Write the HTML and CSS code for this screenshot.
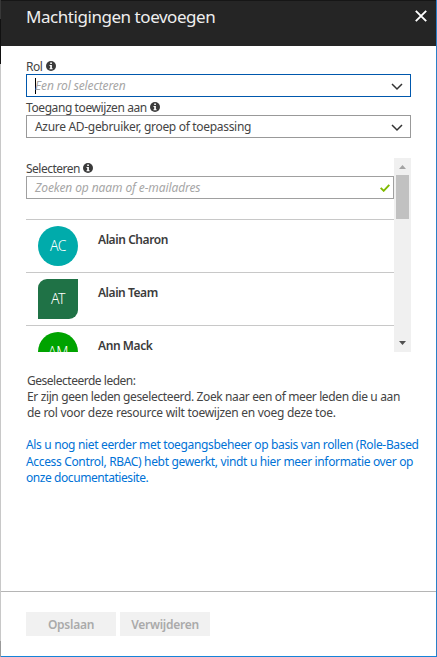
FILE: index.html
```
<!DOCTYPE html>
<html lang="nl">
<head>
<meta charset="utf-8">
<title>Machtigingen toevoegen</title>
<link rel="stylesheet" href="styles.css">
</head>
<body>
<svg class="defs" width="0" height="0" aria-hidden="true">
  <symbol id="info" viewBox="0 0 10 10"><circle cx="5" cy="5" r="5" fill="#3b3b3b"/><path d="M4.2 1.6h1.7v1.5H4.2zM3.5 4h2.4v3.3h.7v1H3.5v-1h.7V5h-.7z" fill="#fff"/></symbol>
  <symbol id="chevron" viewBox="0 0 12 8"><path d="M1 1l5 5 5-5" fill="none" stroke="#333" stroke-width="1.5"/></symbol>
</svg>
<div class="edge"></div>
<main class="blade">
  <header class="header">
    <h1><span class="t-title">Machtigingen toevoegen</span></h1>
    <svg class="close" viewBox="0 0 12 12"><path d="M.8.8l10.4 10.4M11.2.8L.8 11.2" stroke="#fff" stroke-width="1.9"/></svg>
  </header>
  <section class="body">
    <div class="label"><span class="t-rol">Rol</span><svg><use href="#info"/></svg></div>
    <div class="field focused"><i class="caret"></i><span class="hint t-hint1">Een rol selecteren</span><svg class="chevron"><use href="#chevron"/></svg></div>
    <div class="label second"><span class="t-toegang">Toegang toewijzen aan</span><svg><use href="#info"/></svg></div>
    <div class="field"><span class="t-azure">Azure AD-gebruiker, groep of toepassing</span><svg class="chevron"><use href="#chevron"/></svg></div>
    <div class="picker">
      <div class="content">
        <div class="label"><span class="t-select">Selecteren</span><svg><use href="#info"/></svg></div>
        <div class="field search"><span class="hint t-hint2">Zoeken op naam of e-mailadres</span><svg class="check" viewBox="0 0 10 8"><path d="M.7 3.8l3 3L9.3.8" fill="none" stroke="#7fba00" stroke-width="1.9"/></svg></div>
        <ul class="members">
          <li><span class="avatar teal">AC</span><b class="t-charon">Alain Charon</b></li>
          <li><span class="avatar team">AT</span><b class="t-team">Alain Team</b></li>
          <li><span class="avatar green">AM</span><b class="t-mack">Ann Mack</b></li>
        </ul>
      </div>
      <div class="scrollbar">
        <svg viewBox="0 0 7 4"><path d="M0 4h7L3.5 0z" fill="#a3a3a3"/></svg>
        <i class="thumb"></i>
        <svg viewBox="0 0 7 4"><path d="M0 0h7L3.5 4z" fill="#505050"/></svg>
      </div>
    </div>
    <p class="selected"><span class="t-s1">Geselecteerde leden:</span><br><span class="t-s2">Er zijn geen leden geselecteerd. Zoek naar een of meer leden die u aan</span><br><span class="t-s3">de rol voor deze resource wilt toewijzen en voeg deze toe.</span></p>
    <p class="link"><a class="t-l1">Als u nog niet eerder met toegangsbeheer op basis van rollen (Role-Based</a><br><a class="t-l2">Access Control, RBAC) hebt gewerkt, vindt u hier meer informatie over op</a><br><a class="t-l3">onze documentatiesite.</a></p>
  </section>
  <footer class="footer"><button disabled><span class="t-b1">Opslaan</span></button><button disabled><span class="t-b2">Verwijderen</span></button></footer>
</main>
</body>
</html>
```
FILE: styles.css
```
* { box-sizing: border-box; }
body { margin: 0; width: 437px; height: 657px; overflow: hidden; display: flex; background: #fff; color: #444; font: 12px/16px "Noto Sans", sans-serif; white-space: nowrap; }
.defs { position: absolute; }
svg { display: block; flex: none; }
.edge { width: 1px; background: linear-gradient(#383838 0 19px, #111 19px 64px, #c8c8c8 64px 641px, #999 641px); }
.blade { width: 436px; height: 657px; display: flex; flex-direction: column; border-right: 1px solid #2980c8; border-bottom: 1px solid #1683d8; }
.header { height: 46px; flex: none; background: #252525; border-top: 1px solid #161616; padding: 0 9px 0 25px; display: flex; justify-content: space-between; color: #fff; }
h1 { margin: 4px 0 0; font-size: 17px; line-height: 24px; font-weight: 400; color: #eee; }
.close { width: 12px; height: 12px; margin-top: 9px; }
.body { padding: 12px 0 0 25px; flex: 1; }
.label { display: flex; height: 16px; align-items: center; }
.label span { padding-top: 2px; }
.label svg { width: 10px; height: 10px; margin-left: 4px; }
.label.second { margin-top: 2px; }
.label.second svg, .content .label svg { margin-left: 3px; }
.field { width: 385px; height: 23px; border: 1px solid #a0a0a0; display: flex; align-items: center; padding: 1px 8px 0; }
.label.second + .field { border-color: #999; }
.field.focused { border-color: #0058ad; }
.caret { width: 1px; height: 16px; background: #000; margin: -1px -1px 0 0; }
.hint { color: #a6a6a6; font-style: italic; }
.chevron { width: 12px; height: 8px; margin: 1px -1px 0 auto; }
.picker { display: flex; width: 385px; height: 194px; overflow: hidden; margin-top: 20px; }
.content { width: 368px; padding-top: 2px; }
.search { width: 368px; padding-right: 3px; }
.check { width: 10px; height: 8px; margin-left: auto; }
.members { list-style: none; margin: 20px 0 0; padding: 0; }
.members li { height: 53px; border-top: 1px solid #c8c8c8; display: flex; padding: 6px 12px; }
.members b { font-weight: 600; margin: 6px 0 0 20px; color: #3b3b3b; }
.avatar { width: 40px; height: 40px; border-radius: 50%; color: #fff; font-size: 14px; font-weight: 300; letter-spacing: -.4px; line-height: 39px; text-align: center; }
.teal { background: #00abab; }
.team { background: #1f7246; border-radius: 9px 0; }
.green { background: #00a300; }
.scrollbar { width: 17px; background: #f0f0f0; display: flex; flex-direction: column; align-items: center; padding: 7px 0; }
.scrollbar svg { width: 7px; height: 4px; }
.thumb { width: 13px; height: 44px; background: #c1c1c1; margin: 6px 0 auto; }
p { margin: 0; }
.selected { margin: 21px 0 0 1px; }
.link { margin-top: 16px; line-height: 16.5px; color: #0072d6; }
.footer { height: 65px; flex: none; border-top: 1px solid #b5b5b5; padding: 20px 25px; display: flex; gap: 4px; }
button { width: 90px; height: 24px; border: 0; padding: 2px 0 0; background: #f1f1f1; color: #aaa; font: 600 12px/16px "Noto Sans", sans-serif; }
.t-title { letter-spacing: -.45px; }
.t-rol { letter-spacing: -.5px; }
.t-hint1 { letter-spacing: -.13px; }
.t-toegang { letter-spacing: -.41px; }
.t-azure { letter-spacing: -.31px; }
.t-select { letter-spacing: -.5px; }
.t-hint2 { letter-spacing: -.1px; }
.t-charon { letter-spacing: -.42px; }
.t-team { letter-spacing: -.45px; }
.t-mack { letter-spacing: -.42px; }
.t-s1 { letter-spacing: -.48px; }
.t-s2 { letter-spacing: -.37px; }
.t-s3 { letter-spacing: -.28px; }
.t-l1, .t-l2 { letter-spacing: -.34px; }
.t-l3 { letter-spacing: -.43px; }
.t-b1, .t-b2 { letter-spacing: -.25px; }
```
